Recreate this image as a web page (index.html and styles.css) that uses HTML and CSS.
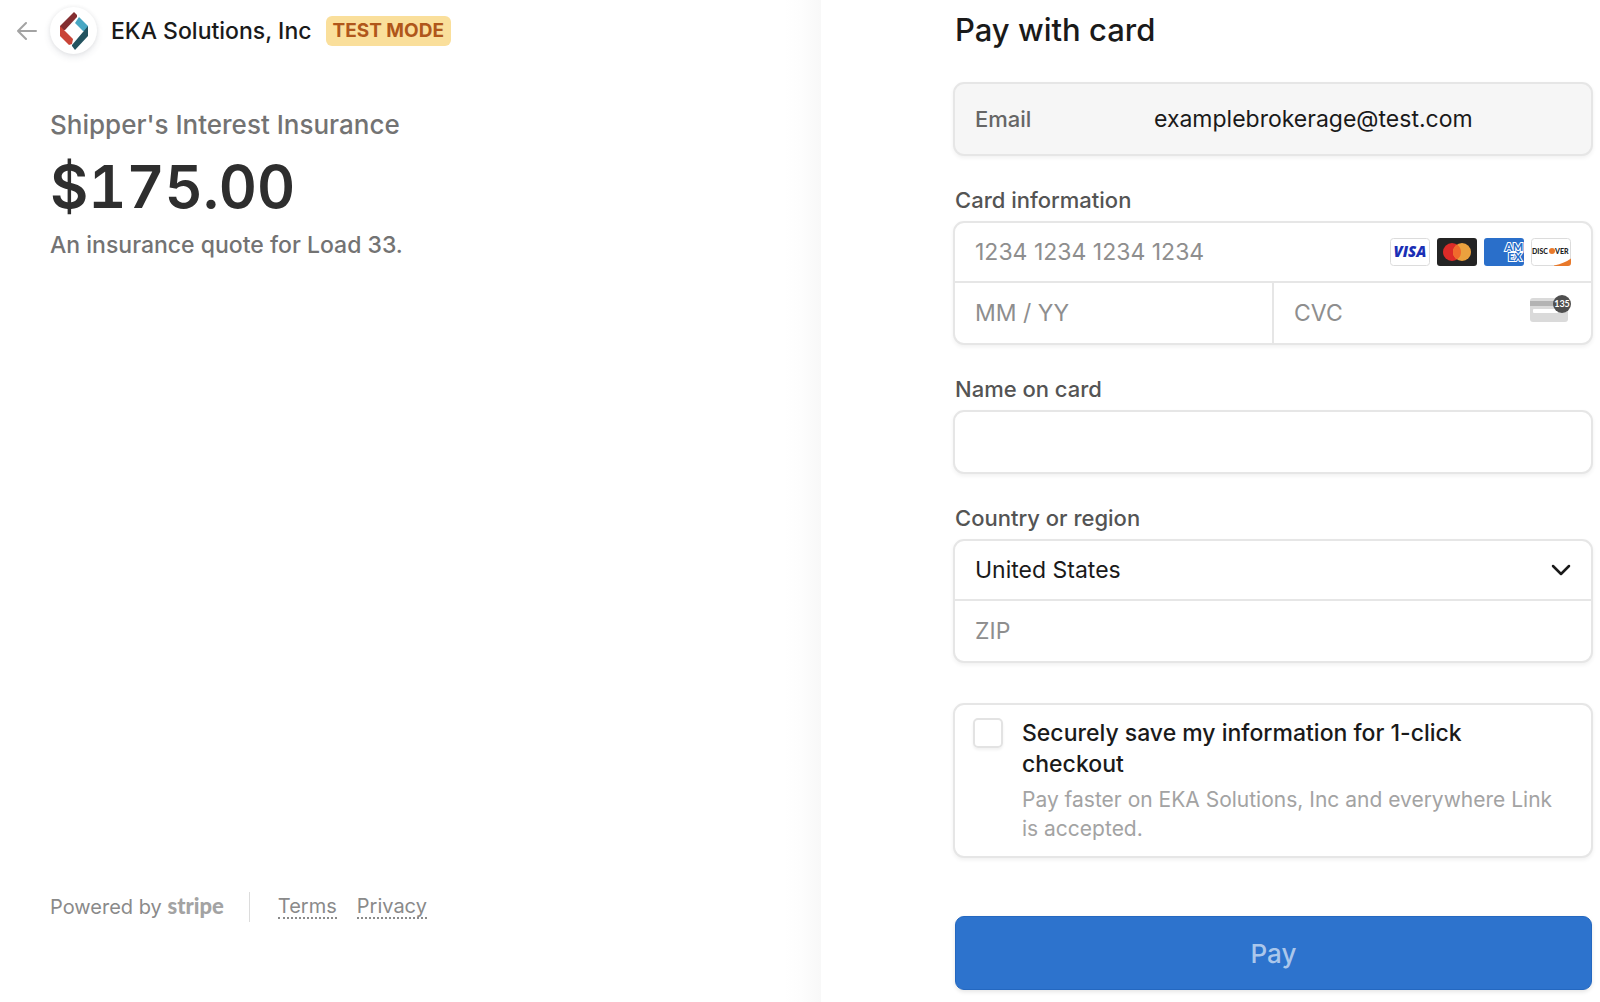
FILE: index.html
```html
<!DOCTYPE html>
<html lang="en">
    <head>
        <title>EKA Solutions, Inc</title>
        <meta charset="utf-8">
        <meta name="viewport" content="width=device-width, initial-scale=1">
        <link rel="stylesheet" href="styles.css">
    </head>
    <body>
        <div class="checkout">
            <section class="overview">
                <header class="business">
                    <a class="back" href="#" aria-label="Back">
                        <svg width="20" height="20" viewBox="0 0 20 20" fill="none" stroke="#a3a3a3" stroke-width="2" stroke-linecap="round" stroke-linejoin="round">
                            <path d="M19 10H1M9 2L1 10l8 8"/>
                        </svg>
                    </a>
                    <span class="logo">
                        <svg width="28" height="38" viewBox="0 0 28 38">
                            <path d="M0 14L14 0l3 3v2L5 18H0z" fill="#842f31"/>
                            <path d="M0 14l5 5 8 8-1 5-3 1L0 24z" fill="#c94437"/>
                            <path d="M19 5l9 9v5h-5l-8-8z" fill="#48a7c3"/>
                            <path d="M28 14v10L15 38l-3-4v-1l11-13z" fill="#23535f"/>
                        </svg>
                    </span>
                    <span class="business-name">EKA Solutions, Inc</span>
                    <span class="badge">TEST MODE</span>
                </header>
                <div class="product">
                    <h1>Shipper's Interest Insurance</h1>
                    <p class="amount">$175.00</p>
                    <p class="description">An insurance quote for Load 33.</p>
                </div>
                <footer>
                    <a class="powered" href="#">Powered by <b>stripe</b></a>
                    <nav>
                        <a href="#">Terms</a>
                        <a href="#">Privacy</a>
                    </nav>
                </footer>
            </section>
            <main class="payment">
                <form>
                    <h2>Pay with card</h2>
                    <div class="box email">
                        <label for="email">Email</label>
                        <input id="email" type="email" value="examplebrokerage@test.com" readonly>
                    </div>

                    <fieldset>
                        <legend>Card information</legend>
                        <div class="box">
                            <div class="row">
                                <input type="text" placeholder="1234 1234 1234 1234" aria-label="Card number">
                                <span class="brands">
                                    <svg width="40" height="28" viewBox="0 0 40 28">
                                        <rect x="0.500" y="0.500" width="39" height="27" rx="3" fill="#fff" stroke="#dcdcdc"/>
                                        <text x="20" y="19" class="visa">VISA</text>
                                    </svg>
                                    <svg width="40" height="28" viewBox="0 0 40 28">
                                        <rect width="40" height="28" rx="3" fill="#242424"/>
                                        <circle cx="15" cy="14" r="9" fill="#dc2b28"/>
                                        <circle cx="25" cy="14" r="9" fill="#eaa13e"/>
                                        <path d="M20 6.500a9 9 0 0 1 0 15a9 9 0 0 1 0-15z" fill="#f06a2c"/>
                                    </svg>
                                    <svg width="40" height="28" viewBox="0 0 40 28">
                                        <rect width="40" height="28" rx="3" fill="#2a6fca"/>
                                        <text x="21" y="13" class="amex">AM</text>
                                        <text x="24" y="23" class="amex">EX</text>
                                    </svg>
                                    <svg width="40" height="28" viewBox="0 0 40 28">
                                        <rect x="0.500" y="0.500" width="39" height="27" rx="3" fill="#fff" stroke="#dcdcdc"/>
                                        <path d="M23 27.500Q34 25 40 20.500V25q0 3-3 3H23z" fill="#e8792b"/>
                                        <text x="1" y="16" class="discover">DISC</text>
                                        <circle cx="21" cy="13" r="3" fill="#e8792b"/>
                                        <text x="24" y="16" class="discover">VER</text>
                                    </svg>
                                </span>
                            </div>
                            <div class="row split">
                                <div class="cell">
                                    <input type="text" placeholder="MM / YY" aria-label="Expiration">
                                </div>
                                <div class="cell">
                                    <input type="text" placeholder="CVC" aria-label="CVC">
                                    <svg class="cvc" width="41" height="36" viewBox="0 0 41 36">
                                        <rect y="3" width="38" height="24" rx="3" fill="#dadada"/>
                                        <rect y="6" width="38" height="5" fill="#b3b3b3"/>
                                        <rect x="3" y="14" width="25" height="4" rx="1" fill="#fff"/>
                                        <circle cx="32" cy="9" r="9" fill="#4f4f4f"/>
                                        <text x="32" y="12" class="digits">135</text>
                                    </svg>
                                </div>
                            </div>
                        </div>
                    </fieldset>

                    <div class="field">
                        <label for="name">Name on card</label>
                        <div class="box">
                            <div class="row last">
                                <input id="name" type="text">
                            </div>
                        </div>
                    </div>

                    <div class="field">
                        <label for="country">Country or region</label>
                        <div class="box">
                            <div class="row">
                                <select id="country">
                                    <option>United States</option>
                                    <option>Canada</option>
                                </select>
                                <svg class="chevron" width="20" height="12" viewBox="0 0 20 12" fill="none" stroke="#1a1a1a" stroke-width="2.500" stroke-linecap="round" stroke-linejoin="round">
                                    <path d="M2 2l8 8 8-8"/>
                                </svg>
                            </div>
                            <div class="row last">
                                <input type="text" placeholder="ZIP" aria-label="ZIP">
                            </div>
                        </div>
                    </div>

                    <div class="box save">
                        <input id="save" type="checkbox">
                        <div>
                            <label for="save">Securely save my information for 1-click checkout</label>
                            <p>Pay faster on EKA Solutions, Inc and everywhere Link is accepted.</p>
                        </div>
                    </div>

                    <button type="submit">Pay</button>
                </form>
            </main>
        </div>
    </body>
</html>
```
FILE: styles.css
```css
*{
    box-sizing: border-box;
}
body{
    margin: 0;
    background-color: #fff;
    color: #1a1a1a;
    font-family: Inter, "Liberation Sans", sans-serif;
    font-size: 23px;
}
h1,h2,p{
    margin: 0;
    font-weight: 400;
}
a{
    color: inherit;
    text-decoration: none;
}
.checkout{
    display: grid;
    grid-template-columns: minmax(0, 821fr) minmax(0, 779fr);
    min-height: 100vh;
}

/* left side */
.overview{
    display: flex;
    flex-direction: column;
    padding: 7px 0 80px 17px;
    background: linear-gradient(to left, #f8f8f8, #fdfdfd 20px, #fff 36px);
}
.business{
    display: flex;
    align-items: center;
    height: 47px;
}
.back{
    display: flex;
}
.logo{
    display: flex;
    align-items: center;
    justify-content: center;
    width: 47px;
    height: 47px;
    margin: 0 14px 0 13px;
    border-radius: 50%;
    background-color: #fff;
    box-shadow: 0 3px 7px rgba(60,66,87,0.12), 0 0 4px rgba(0,0,0,0.06);
}
.business-name{
    font-weight: 500;
}
.badge{
    margin-left: 14px;
    padding: 0 7px;
    border-radius: 6px;
    background-color: #fadf9b;
    color: #b0561a;
    font-size: 19px;
    font-weight: 700;
    line-height: 30px;
}
.product{
    padding: 53px 0 0 33px;
    color: #737373;
}
h1{
    font-size: 26px;
    font-weight: 500;
    line-height: 36px;
}
.amount{
    color: #2e2e2e;
    font-size: 59px;
    font-weight: 600;
    font-variant-numeric: tabular-nums;
    line-height: 88px;
}
.description{
    font-weight: 500;
    line-height: 28px;
}
footer{
    display: flex;
    align-items: center;
    margin-top: auto;
    padding-left: 33px;
    color: #8a8a8a;
    font-size: 20px;
    line-height: 30px;
}
.powered{
    padding-right: 25px;
    border-right: 1px solid #dcdcdc;
}
.powered b{
    color: #a3a3a3;
    font-family: Lato, sans-serif;
    font-size: 22px;
    font-weight: 900;
    line-height: 20px;
}
nav{
    display: flex;
    gap: 20px;
    padding-left: 28px;
}
nav a{
    line-height: 22px;
    border-bottom: 2px dotted #8a8a8a;
}

/* right side */
.payment{
    padding: 8px 7px 11px 132px;
}
h2{
    padding-left: 2px;
    font-size: 31px;
    font-weight: 500;
    line-height: 44px;
}
.box{
    border: 2px solid #e6e6e6;
    border-radius: 11px;
    background-color: #fff;
    box-shadow: 0 2px 4px rgba(0,0,0,0.06);
}
input,select{
    flex: 1;
    min-width: 0;
    height: 100%;
    padding: 0;
    border: none;
    outline: none;
    background: none;
    color: #1a1a1a;
    font: inherit;
}
input::placeholder{
    color: #8e8e8e;
    opacity: 1;
}
select{
    appearance: none;
}
.email{
    display: flex;
    align-items: center;
    height: 74px;
    margin-top: 30px;
    padding: 0 20px;
    background-color: #f6f6f6;
}
.email label{
    flex: 0 0 179px;
    color: #666;
    font-size: 22px;
    font-weight: 500;
}
fieldset,.field{
    min-width: 0;
    margin: 28px 0 0;
    padding: 0;
    border: none;
}
legend,.field label{
    display: block;
    padding: 0 0 5px 2px;
    color: #545454;
    font-size: 22px;
    font-weight: 500;
    line-height: 32px;
}
.row{
    display: flex;
    align-items: center;
    height: 60px;
    padding: 0 20px;
    border-bottom: 2px solid #e6e6e6;
}
.last,.split{
    border-bottom: none;
}
.split{
    padding: 0;
}
.cell{
    display: flex;
    flex: 1;
    align-items: center;
    min-width: 0;
    height: 100%;
    padding: 0 20px;
}
.cell + .cell{
    border-left: 2px solid #e6e6e6;
}
.brands{
    display: flex;
    gap: 7px;
}
.visa{
    fill: #1a2fb5;
    font: italic 800 15px "Open Sans", sans-serif;
    text-anchor: middle;
}
.amex{
    fill: #2a6fca;
    stroke: #fff;
    stroke-width: 2px;
    paint-order: stroke;
    font: 900 11px Lato, sans-serif;
}
.discover{
    fill: #222;
    font: 900 7px Lato, sans-serif;
}
.digits{
    fill: #fff;
    font: 700 9px Lato, sans-serif;
    text-anchor: middle;
}
.save{
    display: flex;
    gap: 19px;
    margin-top: 40px;
    padding: 13px 26px 13px 18px;
}
.save input{
    flex: none;
    appearance: none;
    width: 30px;
    height: 30px;
    margin: 0;
    border: 2px solid #e3e3e3;
    border-radius: 5px;
    box-shadow: 0 2px 3px rgba(0,0,0,0.06);
}
.save input:checked{
    background-color: #2d73cd;
}
.save label{
    display: block;
    padding-right: 20px;
    font-weight: 500;
    line-height: 31px;
}
.save p{
    margin-top: 5px;
    color: #a3a3a3;
    font-size: 21px;
    line-height: 29px;
}
button{
    display: block;
    width: calc(100% - 3px);
    height: 74px;
    margin: 58px 1px 0 2px;
    border: 1px solid #2468c0;
    border-radius: 9px;
    background-color: #2d73cd;
    box-shadow: 0 2px 4px rgba(0,0,0,0.1);
    color: #abc7eb;
    font: inherit;
    font-size: 26px;
    font-weight: 500;
    cursor: pointer;
}
```
